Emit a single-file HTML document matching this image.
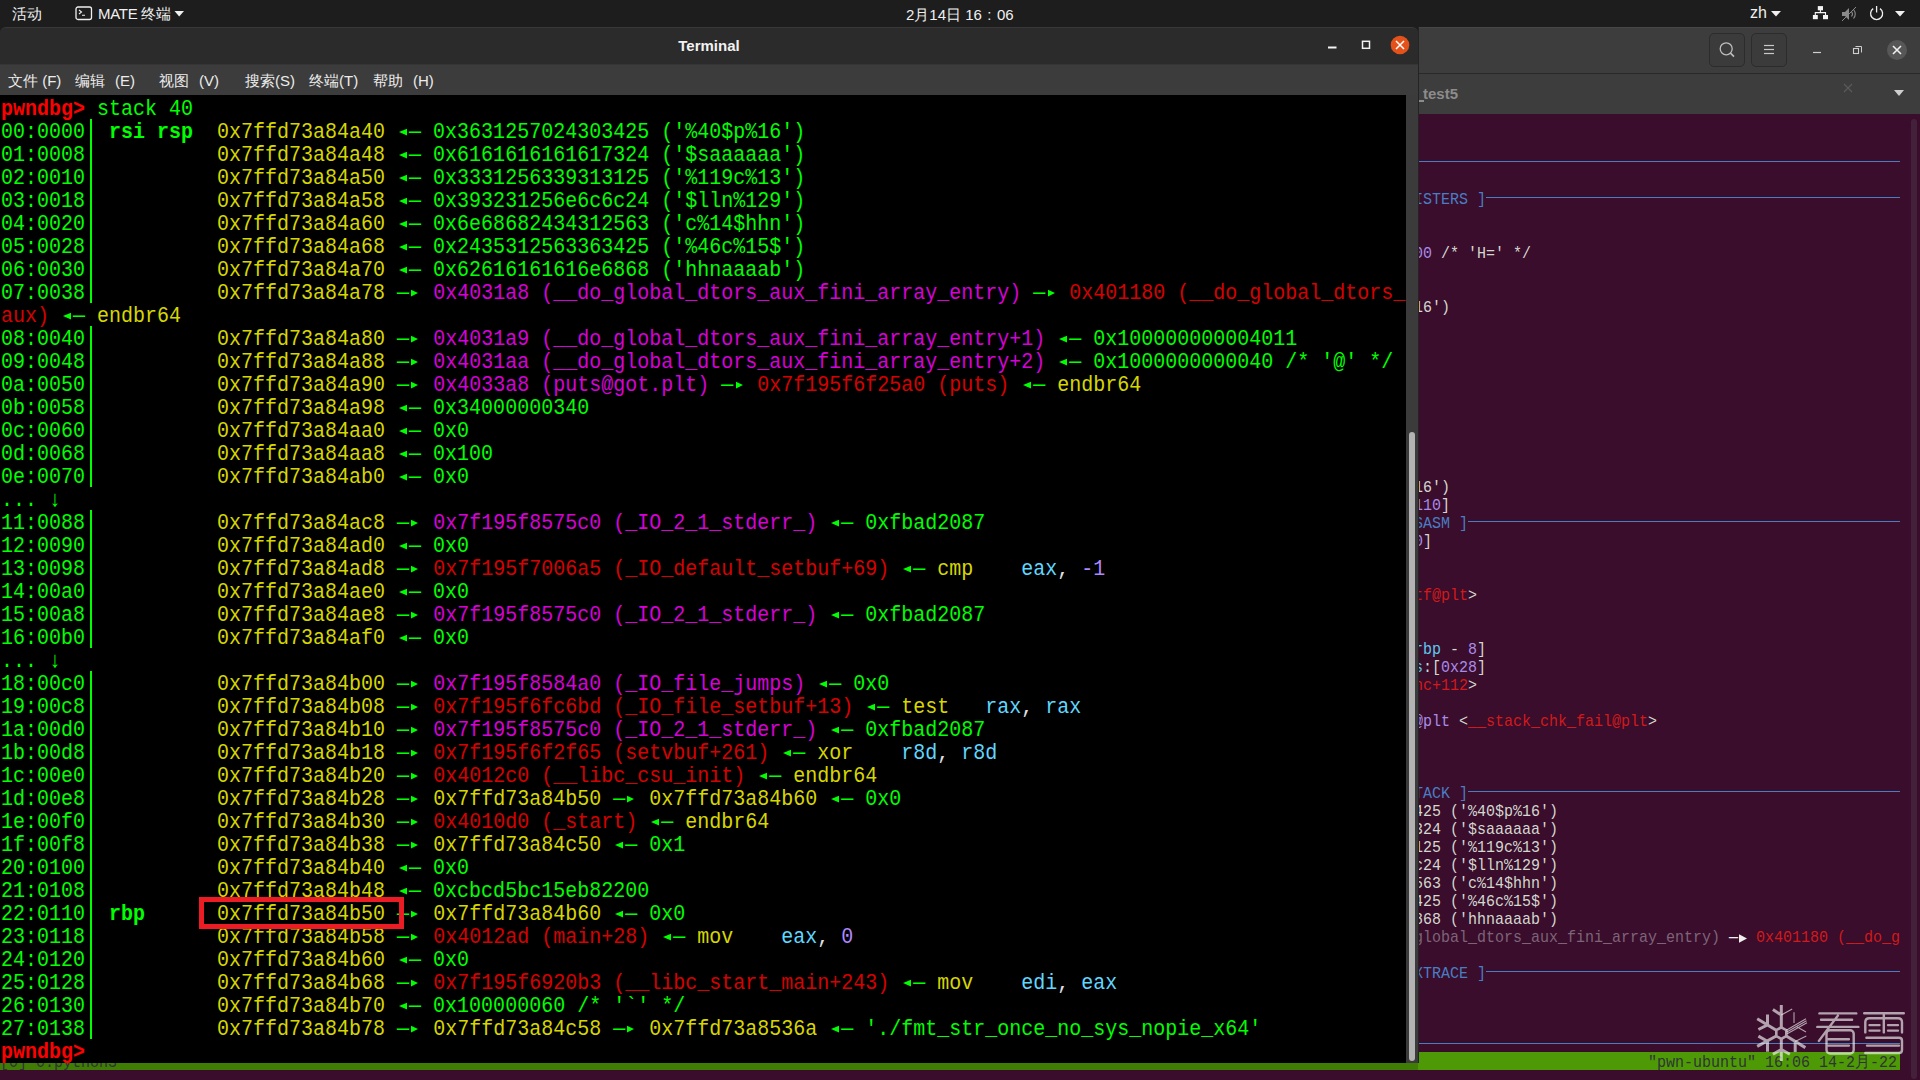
<!DOCTYPE html>
<html><head><meta charset="utf-8">
<style>
*{margin:0;padding:0;box-sizing:border-box}
html,body{width:1920px;height:1080px;overflow:hidden;background:#390d2b;font-family:"Liberation Sans",sans-serif;position:relative}
.abs{position:absolute}
i{font-style:normal}
/* top panel */
#panel{position:absolute;left:0;top:0;width:1920px;height:27px;background:#1d1d1d;color:#f0f0f0;font-size:15px}
/* background window */
#bw-dark{position:absolute;left:0;top:27px;width:1418px;height:40px;background:#1d1d1d}
#bw-head{position:absolute;left:1418px;top:27px;width:502px;height:46px;background:#3d3d3d;border-top:1px solid #474747}
#bw-line{position:absolute;left:1418px;top:73px;width:502px;height:1px;background:#292929}
#bw-tabs{position:absolute;left:1418px;top:74px;width:502px;height:40px;background:#3d3d3d;color:#8c8c8c;font-weight:bold;font-size:15px}
#bw-body{position:absolute;left:1418px;top:114px;width:502px;height:966px;background:#390d2b;overflow:hidden}
.bl{position:absolute;height:1px;background:#4a7cc0}
.rt{position:absolute;left:-4px;white-space:pre;font-family:"Liberation Mono",monospace;font-size:15px;line-height:17px;height:17px;transform-origin:0 0;transform:scaleY(1.0667)}
.hb{position:absolute;top:6px;width:36px;height:34px;border:1px solid #2c2c2c;border-radius:5px;background:#3b3b3b}
/* main window */
#win{position:absolute;left:0;top:27px;width:1418px;height:1036px;background:#2b2b2b;border-radius:6px 6px 0 0;overflow:hidden;border-top:1px solid #383838}
#title{position:absolute;left:0;top:0;width:1418px;height:36px;color:#f2f2f2;font-weight:bold;font-size:15px;text-align:center;line-height:36px}
#menu{position:absolute;left:0;top:36px;width:1418px;height:31px;background:#3c3c3c;color:#ececec;font-size:15px;border-top:1px solid #353535}
#menu span{position:absolute;top:7px}
#term{position:absolute;left:0;top:67px;width:1406px;height:968px;background:#000;overflow:hidden}
#sb{position:absolute;left:1406px;top:67px;width:12px;height:969px;background:#3b3b3b}
#thumb{position:absolute;left:3px;top:337px;width:6px;height:629px;background:#b3b3b3;border-radius:3px}
.ln{position:absolute;left:1px;white-space:pre;font-family:"Liberation Mono",monospace;font-size:20px;line-height:21px;height:21px;transform-origin:0 0;transform:scaleY(1.1)}
.bar{position:absolute;left:90px;width:2px;background:#00ff00}
.g{color:#00ff00}.gb{color:#00ff00;font-weight:bold}.y{color:#d7d700}.m{color:#d700d7}.rd{color:#d70000}
.rb{color:#ff0000;font-weight:bold}.b{color:#5fd7ff}.p{color:#af87ff}.w{color:#e0e0e0}
.al,.ar,.ar2{display:inline-block;position:relative;width:12px;height:21px;vertical-align:top}
.al::after{content:"";position:absolute;left:2.2px;top:8.3px;border-right:8.2px solid currentColor;border-top:3.65px solid transparent;border-bottom:3.65px solid transparent}
.ar::after{content:"";position:absolute;left:2.3px;top:8.2px;border-left:7.8px solid currentColor;border-top:3.65px solid transparent;border-bottom:3.65px solid transparent}
.ar2{width:9px;height:17px}
.ar2::after{content:"";position:absolute;left:1px;top:5px;border-left:8px solid currentColor;border-top:4px solid transparent;border-bottom:4px solid transparent}
#status{position:absolute;left:0;top:1052px;width:1900px;height:18px;background:#4e9a06}
#status2{position:absolute;left:0;top:1063px;width:1418px;height:7px;background:#3f7d05}
#stxt{position:absolute;left:1648px;top:1054px;white-space:pre;font-family:"Liberation Mono",monospace;font-size:15px;line-height:17px;color:#2e3436;transform-origin:0 0;transform:scaleY(1.0667)}
#wm{position:absolute;left:1750px;top:1000px;width:160px;height:70px}
.cj{display:inline-block;width:1em;text-align:center}
</style></head><body>

<!-- background window -->
<div id="bw-dark"></div>
<div id="bw-head">
  <div class="hb" style="left:291px;top:5px"></div>
  <div class="hb" style="left:333px;top:5px"></div>
  <svg class="abs" style="left:0;top:0" width="502" height="46">
    <circle cx="308.2" cy="20.8" r="6" fill="none" stroke="#bdbdbd" stroke-width="1.3"/>
    <line x1="312.5" y1="25.1" x2="316" y2="28.6" stroke="#bdbdbd" stroke-width="1.6"/>
    <g stroke="#c8c8c8" stroke-width="1.2"><line x1="346" y1="17.5" x2="356" y2="17.5"/><line x1="346" y1="21.5" x2="356" y2="21.5"/><line x1="346" y1="25.5" x2="356" y2="25.5"/></g>
    <line x1="395" y1="24.5" x2="403" y2="24.5" stroke="#cfcfcf" stroke-width="1.2"/>
    <rect x="435.5" y="20.5" width="5" height="5" fill="none" stroke="#cfcfcf" stroke-width="1.1"/>
    <path d="M437.5 18.5 H443.5 V24.5" fill="none" stroke="#cfcfcf" stroke-width="1"/>
    <circle cx="479" cy="22" r="10" fill="#575757"/>
    <path d="M475 18 L483 26 M483 18 L475 26" stroke="#f0f0f0" stroke-width="1.6"/>
  </svg>
</div>
<div id="bw-line"></div>
<div id="bw-tabs"><div class="abs" style="left:5px;top:11px">test5</div><div class="abs" style="left:1px;top:26px;width:5px;height:2px;background:#8c8c8c"></div>
  <svg class="abs" style="left:0;top:0" width="502" height="40">
    <path d="M426 10 L434 18 M434 10 L426 18" stroke="#5a5a5a" stroke-width="1.2"/>
    <path d="M476 16 L486 16 L481 22 Z" fill="#cfcfcf"/>
  </svg>
</div>
<div id="bw-body">
  <div class="abs" style="left:493px;top:5px;width:6px;height:960px;background:#44213b;border-radius:3px"></div>
<div class="rt" style="top:77px"><i style="color:#4a7ec4">ISTERS ]</i></div>
<div class="rt" style="top:131px"><i style="color:#a98be8">00</i><i style="color:#d3d7cf"> /* 'H=' */</i></div>
<div class="rt" style="top:185px"><i style="color:#d3d7cf">16')</i></div>
<div class="rt" style="top:365px"><i style="color:#d3d7cf">16')</i></div>
<div class="rt" style="top:383px"><i style="color:#a98be8">110</i><i style="color:#d3d7cf">]</i></div>
<div class="rt" style="top:401px"><i style="color:#4a7ec4">SASM ]</i></div>
<div class="rt" style="top:419px"><i style="color:#a98be8">0</i><i style="color:#d3d7cf">]</i></div>
<div class="rt" style="top:473px"><i style="color:#d21a1a">tf@plt</i><i style="color:#d3d7cf">&gt;</i></div>
<div class="rt" style="top:527px"><i style="color:#5fc8f0">rbp</i><i style="color:#d3d7cf"> - </i><i style="color:#a98be8">8</i><i style="color:#d3d7cf">]</i></div>
<div class="rt" style="top:545px"><i style="color:#5fc8f0">s</i><i style="color:#d3d7cf">:[</i><i style="color:#a98be8">0x28</i><i style="color:#d3d7cf">]</i></div>
<div class="rt" style="top:563px"><i style="color:#d21a1a">nc+112</i><i style="color:#d3d7cf">&gt;</i></div>
<div class="rt" style="top:599px"><i style="color:#a98be8">@plt</i><i style="color:#d3d7cf"> &lt;</i><i style="color:#d21a1a">__stack_chk_fail@plt</i><i style="color:#d3d7cf">&gt;</i></div>
<div class="rt" style="top:671px"><i style="color:#4a7ec4">TACK ]</i></div>
<div class="rt" style="top:689px"><i style="color:#d3d7cf">425 ('%40$p%16')</i></div>
<div class="rt" style="top:707px"><i style="color:#d3d7cf">324 ('$saaaaaa')</i></div>
<div class="rt" style="top:725px"><i style="color:#d3d7cf">125 ('%119c%13')</i></div>
<div class="rt" style="top:743px"><i style="color:#d3d7cf">c24 ('$lln%129')</i></div>
<div class="rt" style="top:761px"><i style="color:#d3d7cf">563 ('c%14$hhn')</i></div>
<div class="rt" style="top:779px"><i style="color:#d3d7cf">425 ('%46c%15$')</i></div>
<div class="rt" style="top:797px"><i style="color:#d3d7cf">868 ('hhnaaaab')</i></div>
<div class="rt" style="top:815px"><i style="color:#7e6479">global_dtors_aux_fini_array_entry)</i><i style="color:#eeeeee"> —<i class="ar2"></i> </i><i style="color:#d21a1a">0x401180 (__do_g</i></div>
<div class="rt" style="top:851px"><i style="color:#4a7ec4">XTRACE ]</i></div>
<div class="bl" style="top:47px;left:0px;width:482px"></div>
<div class="bl" style="top:83px;left:68px;width:414px"></div>
<div class="bl" style="top:407px;left:50px;width:432px"></div>
<div class="bl" style="top:677px;left:50px;width:432px"></div>
<div class="bl" style="top:857px;left:68px;width:414px"></div>
<div class="bl" style="top:929px;left:0px;width:482px"></div>
</div>
<div id="status"></div>
<div id="stxt">"pwn-ubuntu" 16:06 14-2<i class="cj">月</i>-22</div>
<div id="status2"></div>
<div class="abs" style="left:0px;top:1054px;white-space:pre;font-family:'Liberation Mono',monospace;font-size:15px;line-height:17px;color:#2e3436;transform-origin:0 0;transform:scaleY(1.0667)">[0] 0:python3*</div>
<div class="abs" style="left:1418px;top:27px;width:1px;height:1036px;background:#242424"></div>
<svg id="wm" viewBox="0 0 160 70" width="160" height="70">
  <g stroke="#ffffff" opacity="0.62" fill="none" stroke-width="3" stroke-linejoin="miter">
    <polygon points="31.3,27.3 36.3,30.2 36.3,36 31.3,38.9 26.3,36 26.3,30.2" stroke-width="2.6"/>
    <path d="M31.3 5 V27.3 M31.3 38.9 V61 M26.3 30.2 L7.2 18.7 M26.3 36 L7.2 46.4 M36.3 36 L55.4 47.6 M22.9 9.6 L31.3 15 M22.9 54.2 L31.3 49.5 L39.8 54.2 M17.5 14.5 V24.9 M17.5 24.9 L8.4 29.5 M8.4 36.1 L17.5 41.3 V51.8 M45.2 41.6 V52"/>
  </g>
  <g stroke="#ffffff" stroke-opacity="0.62" fill="none" stroke-width="1.1">
    <path d="M31.3 15 L42.2 9 M36.3 30.2 L56 18.7 M36.8 32 L56.5 20.8 M37.2 33.8 L57 22.8 M44 12.3 V23 M46.4 26.5 L56 32 M45.2 41.6 L56.3 36.1"/>
  </g>
  <g stroke="#ffffff" opacity="0.62" fill="none" stroke-width="2.4" stroke-linecap="round">
    <path d="M69.4 13.4 H106.3 M71 19.8 H102.1 M67.3 26.9 H108.4 M87.9 15.6 L68.9 40.9 M77.8 39.3 H98.9 M77.8 45.6 H98.9"/>
    <rect x="76.5" y="30.3" width="27.2" height="23.2" rx="3.5"/>
    <path d="M114.2 13.2 H153.8 M133.8 15 V32.4 M115.3 32.4 V22.2 Q115.3 18.2 119.3 18.2 H148 Q152 18.2 152 22.2 V32.4 M119.5 25.1 H129.5 M138 25.1 H148 M119.5 30.6 H129.5 M138 30.6 H148 M116.4 37.7 H149.1 Q152 37.7 152 40.7 V50 Q152 53 149 53 H115.3 M117 45.6 H149"/>
  </g>
</svg>

<!-- top panel -->
<div id="panel">
  <div class="abs" style="left:12px;top:5px"><i class="cj">活</i><i class="cj">动</i></div>
  <svg class="abs" style="left:75px;top:6px" width="18" height="15"><rect x="1" y="1" width="15.5" height="12.5" rx="2" fill="none" stroke="#f0f0f0" stroke-width="1.3"/><path d="M4 4 L6.5 6 L4 8 M7 9.2 H10" stroke="#f0f0f0" stroke-width="1.1" fill="none"/></svg>
  <div class="abs" style="left:98px;top:5px;font-size:15px;letter-spacing:-0.3px">MATE <i class="cj">终</i><i class="cj">端</i></div>
  <svg class="abs" style="left:174px;top:10px" width="12" height="8"><path d="M0.5 1 H10 L5.2 6.5 Z" fill="#f0f0f0"/></svg>
  <div class="abs" style="left:906px;top:6px">2<i class="cj">月</i>14<i class="cj">日</i> 16<i class="cj">:</i>06</div>
  <div class="abs" style="left:1750px;top:4px;font-size:16px">zh</div>
  <svg class="abs" style="left:1770px;top:10px" width="12" height="8"><path d="M1 1 H11 L6 6.5 Z" fill="#f0f0f0"/></svg>
  <svg class="abs" style="left:1810px;top:5px" width="110" height="18">
    <rect x="7.8" y="1.1" width="5.2" height="4.2" fill="#f4f4f4"/>
    <rect x="2.9" y="10" width="4.9" height="4.2" fill="#f4f4f4"/><rect x="13" y="10" width="5" height="4.2" fill="#f4f4f4"/>
    <path d="M10.4 5 V7.6 M5.3 10 V7.6 H15.5 V10" stroke="#f4f4f4" stroke-width="1.1" fill="none"/>
    <path d="M32 7 H35 L39 3 V15 L35 11 H32 Z" fill="#8a8a8a"/>
    <path d="M41.5 6.5 Q43.5 9 41.5 11.5 M43.5 4.5 Q47 9 43.5 13.5" stroke="#8a8a8a" stroke-width="1.1" fill="none"/>
    <line x1="32" y1="16" x2="46" y2="2" stroke="#8a8a8a" stroke-width="1"/>
    <path d="M63.2 3.6 A6 6 0 1 0 70 3.6" stroke="#f0f0f0" stroke-width="1.3" fill="none"/>
    <line x1="66.6" y1="1" x2="66.6" y2="7.5" stroke="#f0f0f0" stroke-width="1.3"/>
    <path d="M85 6 H95 L90 11.5 Z" fill="#f0f0f0"/>
  </svg>
</div>

<!-- main window -->
<div id="win">
  <div id="title">Terminal</div>
  <svg class="abs" style="left:1320px;top:5px" width="98" height="26">
    <rect x="8" y="13.5" width="8.5" height="2" fill="#f4f4f4"/>
    <rect x="42.5" y="8.3" width="7" height="7" fill="none" stroke="#f4f4f4" stroke-width="1.5"/>
    <circle cx="80" cy="12" r="9.3" fill="#e2521a"/>
    <path d="M76 8 L84 16 M84 8 L76 16" stroke="#fff" stroke-width="1.5"/>
  </svg>
  <div id="menu">
    <span style="left:8px"><i class="cj">文</i><i class="cj">件</i> (F)</span>
    <span style="left:75px"><i class="cj">编</i><i class="cj">辑</i><i class="cj" style="text-align:right">(</i>E<i class="cj" style="text-align:left">)</i></span>
    <span style="left:159px"><i class="cj">视</i><i class="cj">图</i><i class="cj" style="text-align:right">(</i>V<i class="cj" style="text-align:left">)</i></span>
    <span style="left:245px"><i class="cj">搜</i><i class="cj">索</i>(S)</span>
    <span style="left:309px"><i class="cj">终</i><i class="cj">端</i>(T)</span>
    <span style="left:373px"><i class="cj">帮</i><i class="cj">助</i><i class="cj" style="text-align:right">(</i>H<i class="cj" style="text-align:left">)</i></span>
  </div>
  <div id="term">
<div class="ln" style="top:2px"><i class="rb">pwndbg&gt; </i><i class="g">stack 40</i></div>
<div class="ln" style="top:25px"><i class="g">00:0000</i><i class="g"> </i><i class="gb"> rsi rsp  </i><i class="y">0x7ffd73a84a40</i><i class="g"> </i><i class="g"><i class="al"></i>— 0x3631257024303425 ('%40$p%16')</i></div>
<div class="ln" style="top:48px"><i class="g">01:0008</i><i class="g"> </i><i class="gb">          </i><i class="y">0x7ffd73a84a48</i><i class="g"> </i><i class="g"><i class="al"></i>— 0x6161616161617324 ('$saaaaaa')</i></div>
<div class="ln" style="top:71px"><i class="g">02:0010</i><i class="g"> </i><i class="gb">          </i><i class="y">0x7ffd73a84a50</i><i class="g"> </i><i class="g"><i class="al"></i>— 0x3331256339313125 ('%119c%13')</i></div>
<div class="ln" style="top:94px"><i class="g">03:0018</i><i class="g"> </i><i class="gb">          </i><i class="y">0x7ffd73a84a58</i><i class="g"> </i><i class="g"><i class="al"></i>— 0x393231256e6c6c24 ('$lln%129')</i></div>
<div class="ln" style="top:117px"><i class="g">04:0020</i><i class="g"> </i><i class="gb">          </i><i class="y">0x7ffd73a84a60</i><i class="g"> </i><i class="g"><i class="al"></i>— 0x6e68682434312563 ('c%14$hhn')</i></div>
<div class="ln" style="top:140px"><i class="g">05:0028</i><i class="g"> </i><i class="gb">          </i><i class="y">0x7ffd73a84a68</i><i class="g"> </i><i class="g"><i class="al"></i>— 0x2435312563363425 ('%46c%15$')</i></div>
<div class="ln" style="top:163px"><i class="g">06:0030</i><i class="g"> </i><i class="gb">          </i><i class="y">0x7ffd73a84a70</i><i class="g"> </i><i class="g"><i class="al"></i>— 0x62616161616e6868 ('hhnaaaab')</i></div>
<div class="ln" style="top:186px"><i class="g">07:0038</i><i class="g"> </i><i class="gb">          </i><i class="y">0x7ffd73a84a78</i><i class="g"> </i><i class="g">—<i class="ar"></i> </i><i class="m">0x4031a8 (__do_global_dtors_aux_fini_array_entry)</i><i class="g"> —<i class="ar"></i> </i><i class="rd">0x401180 (__do_global_dtors_</i></div>
<div class="ln" style="top:209px"><i class="rd">aux)</i><i class="g"> <i class="al"></i>— </i><i class="y">endbr64</i></div>
<div class="ln" style="top:232px"><i class="g">08:0040</i><i class="g"> </i><i class="gb">          </i><i class="y">0x7ffd73a84a80</i><i class="g"> </i><i class="g">—<i class="ar"></i> </i><i class="m">0x4031a9 (__do_global_dtors_aux_fini_array_entry+1)</i><i class="g"> <i class="al"></i>— 0x100000000004011</i></div>
<div class="ln" style="top:255px"><i class="g">09:0048</i><i class="g"> </i><i class="gb">          </i><i class="y">0x7ffd73a84a88</i><i class="g"> </i><i class="g">—<i class="ar"></i> </i><i class="m">0x4031aa (__do_global_dtors_aux_fini_array_entry+2)</i><i class="g"> <i class="al"></i>— 0x1000000000040 /* '@' */</i></div>
<div class="ln" style="top:278px"><i class="g">0a:0050</i><i class="g"> </i><i class="gb">          </i><i class="y">0x7ffd73a84a90</i><i class="g"> </i><i class="g">—<i class="ar"></i> </i><i class="m">0x4033a8 (puts@got.plt)</i><i class="g"> —<i class="ar"></i> </i><i class="rd">0x7f195f6f25a0 (puts)</i><i class="g"> <i class="al"></i>— </i><i class="y">endbr64</i></div>
<div class="ln" style="top:301px"><i class="g">0b:0058</i><i class="g"> </i><i class="gb">          </i><i class="y">0x7ffd73a84a98</i><i class="g"> </i><i class="g"><i class="al"></i>— 0x34000000340</i></div>
<div class="ln" style="top:324px"><i class="g">0c:0060</i><i class="g"> </i><i class="gb">          </i><i class="y">0x7ffd73a84aa0</i><i class="g"> </i><i class="g"><i class="al"></i>— 0x0</i></div>
<div class="ln" style="top:347px"><i class="g">0d:0068</i><i class="g"> </i><i class="gb">          </i><i class="y">0x7ffd73a84aa8</i><i class="g"> </i><i class="g"><i class="al"></i>— 0x100</i></div>
<div class="ln" style="top:370px"><i class="g">0e:0070</i><i class="g"> </i><i class="gb">          </i><i class="y">0x7ffd73a84ab0</i><i class="g"> </i><i class="g"><i class="al"></i>— 0x0</i></div>
<div class="ln" style="top:393px"><i class="g">... ↓</i></div>
<div class="ln" style="top:416px"><i class="g">11:0088</i><i class="g"> </i><i class="gb">          </i><i class="y">0x7ffd73a84ac8</i><i class="g"> </i><i class="g">—<i class="ar"></i> </i><i class="m">0x7f195f8575c0 (_IO_2_1_stderr_)</i><i class="g"> <i class="al"></i>— 0xfbad2087</i></div>
<div class="ln" style="top:439px"><i class="g">12:0090</i><i class="g"> </i><i class="gb">          </i><i class="y">0x7ffd73a84ad0</i><i class="g"> </i><i class="g"><i class="al"></i>— 0x0</i></div>
<div class="ln" style="top:462px"><i class="g">13:0098</i><i class="g"> </i><i class="gb">          </i><i class="y">0x7ffd73a84ad8</i><i class="g"> </i><i class="g">—<i class="ar"></i> </i><i class="rd">0x7f195f7006a5 (_IO_default_setbuf+69)</i><i class="g"> <i class="al"></i>— </i><i class="y">cmp    </i><i class="b">eax</i><i class="w">, </i><i class="p">-1</i></div>
<div class="ln" style="top:485px"><i class="g">14:00a0</i><i class="g"> </i><i class="gb">          </i><i class="y">0x7ffd73a84ae0</i><i class="g"> </i><i class="g"><i class="al"></i>— 0x0</i></div>
<div class="ln" style="top:508px"><i class="g">15:00a8</i><i class="g"> </i><i class="gb">          </i><i class="y">0x7ffd73a84ae8</i><i class="g"> </i><i class="g">—<i class="ar"></i> </i><i class="m">0x7f195f8575c0 (_IO_2_1_stderr_)</i><i class="g"> <i class="al"></i>— 0xfbad2087</i></div>
<div class="ln" style="top:531px"><i class="g">16:00b0</i><i class="g"> </i><i class="gb">          </i><i class="y">0x7ffd73a84af0</i><i class="g"> </i><i class="g"><i class="al"></i>— 0x0</i></div>
<div class="ln" style="top:554px"><i class="g">... ↓</i></div>
<div class="ln" style="top:577px"><i class="g">18:00c0</i><i class="g"> </i><i class="gb">          </i><i class="y">0x7ffd73a84b00</i><i class="g"> </i><i class="g">—<i class="ar"></i> </i><i class="m">0x7f195f8584a0 (_IO_file_jumps)</i><i class="g"> <i class="al"></i>— 0x0</i></div>
<div class="ln" style="top:600px"><i class="g">19:00c8</i><i class="g"> </i><i class="gb">          </i><i class="y">0x7ffd73a84b08</i><i class="g"> </i><i class="g">—<i class="ar"></i> </i><i class="rd">0x7f195f6fc6bd (_IO_file_setbuf+13)</i><i class="g"> <i class="al"></i>— </i><i class="y">test   </i><i class="b">rax</i><i class="w">, </i><i class="b">rax</i></div>
<div class="ln" style="top:623px"><i class="g">1a:00d0</i><i class="g"> </i><i class="gb">          </i><i class="y">0x7ffd73a84b10</i><i class="g"> </i><i class="g">—<i class="ar"></i> </i><i class="m">0x7f195f8575c0 (_IO_2_1_stderr_)</i><i class="g"> <i class="al"></i>— 0xfbad2087</i></div>
<div class="ln" style="top:646px"><i class="g">1b:00d8</i><i class="g"> </i><i class="gb">          </i><i class="y">0x7ffd73a84b18</i><i class="g"> </i><i class="g">—<i class="ar"></i> </i><i class="rd">0x7f195f6f2f65 (setvbuf+261)</i><i class="g"> <i class="al"></i>— </i><i class="y">xor    </i><i class="b">r8d</i><i class="w">, </i><i class="b">r8d</i></div>
<div class="ln" style="top:669px"><i class="g">1c:00e0</i><i class="g"> </i><i class="gb">          </i><i class="y">0x7ffd73a84b20</i><i class="g"> </i><i class="g">—<i class="ar"></i> </i><i class="rd">0x4012c0 (__libc_csu_init)</i><i class="g"> <i class="al"></i>— </i><i class="y">endbr64</i></div>
<div class="ln" style="top:692px"><i class="g">1d:00e8</i><i class="g"> </i><i class="gb">          </i><i class="y">0x7ffd73a84b28</i><i class="g"> </i><i class="g">—<i class="ar"></i> </i><i class="y">0x7ffd73a84b50</i><i class="g"> —<i class="ar"></i> </i><i class="y">0x7ffd73a84b60</i><i class="g"> <i class="al"></i>— 0x0</i></div>
<div class="ln" style="top:715px"><i class="g">1e:00f0</i><i class="g"> </i><i class="gb">          </i><i class="y">0x7ffd73a84b30</i><i class="g"> </i><i class="g">—<i class="ar"></i> </i><i class="rd">0x4010d0 (_start)</i><i class="g"> <i class="al"></i>— </i><i class="y">endbr64</i></div>
<div class="ln" style="top:738px"><i class="g">1f:00f8</i><i class="g"> </i><i class="gb">          </i><i class="y">0x7ffd73a84b38</i><i class="g"> </i><i class="g">—<i class="ar"></i> </i><i class="y">0x7ffd73a84c50</i><i class="g"> <i class="al"></i>— 0x1</i></div>
<div class="ln" style="top:761px"><i class="g">20:0100</i><i class="g"> </i><i class="gb">          </i><i class="y">0x7ffd73a84b40</i><i class="g"> </i><i class="g"><i class="al"></i>— 0x0</i></div>
<div class="ln" style="top:784px"><i class="g">21:0108</i><i class="g"> </i><i class="gb">          </i><i class="y">0x7ffd73a84b48</i><i class="g"> </i><i class="g"><i class="al"></i>— 0xcbcd5bc15eb82200</i></div>
<div class="ln" style="top:807px"><i class="g">22:0110</i><i class="g"> </i><i class="gb"> rbp      </i><i class="y">0x7ffd73a84b50</i><i class="g"> </i><i class="g">—<i class="ar"></i> </i><i class="y">0x7ffd73a84b60</i><i class="g"> <i class="al"></i>— 0x0</i></div>
<div class="ln" style="top:830px"><i class="g">23:0118</i><i class="g"> </i><i class="gb">          </i><i class="y">0x7ffd73a84b58</i><i class="g"> </i><i class="g">—<i class="ar"></i> </i><i class="rd">0x4012ad (main+28)</i><i class="g"> <i class="al"></i>— </i><i class="y">mov    </i><i class="b">eax</i><i class="w">, </i><i class="p">0</i></div>
<div class="ln" style="top:853px"><i class="g">24:0120</i><i class="g"> </i><i class="gb">          </i><i class="y">0x7ffd73a84b60</i><i class="g"> </i><i class="g"><i class="al"></i>— 0x0</i></div>
<div class="ln" style="top:876px"><i class="g">25:0128</i><i class="g"> </i><i class="gb">          </i><i class="y">0x7ffd73a84b68</i><i class="g"> </i><i class="g">—<i class="ar"></i> </i><i class="rd">0x7f195f6920b3 (__libc_start_main+243)</i><i class="g"> <i class="al"></i>— </i><i class="y">mov    </i><i class="b">edi</i><i class="w">, </i><i class="b">eax</i></div>
<div class="ln" style="top:899px"><i class="g">26:0130</i><i class="g"> </i><i class="gb">          </i><i class="y">0x7ffd73a84b70</i><i class="g"> </i><i class="g"><i class="al"></i>— 0x100000060 /* '`' */</i></div>
<div class="ln" style="top:922px"><i class="g">27:0138</i><i class="g"> </i><i class="gb">          </i><i class="y">0x7ffd73a84b78</i><i class="g"> </i><i class="g">—<i class="ar"></i> </i><i class="y">0x7ffd73a84c58</i><i class="g"> —<i class="ar"></i> </i><i class="y">0x7ffd73a8536a</i><i class="g"> <i class="al"></i>— './fmt_str_once_no_sys_nopie_x64'</i></div>
<div class="ln" style="top:945px"><i class="rb">pwndbg&gt; </i></div>
    <div class="bar" style="top:24px;height:184px"></div>
    <div class="bar" style="top:231px;height:161px"></div>
    <div class="bar" style="top:415px;height:138px"></div>
    <div class="bar" style="top:576px;height:368px"></div>
    <div class="abs" style="left:199px;top:802px;width:205px;height:32px;border:5px solid #ec1c24"></div>
  </div>
  <div id="sb"><div id="thumb"></div></div>
</div>

</body></html>
